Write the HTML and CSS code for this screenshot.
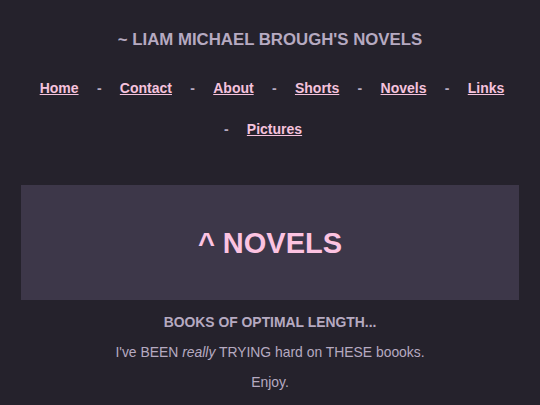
FILE: index.html
```html
<!DOCTYPE html>
<html lang="en">
<head>
<meta charset="utf-8">
<title>Novels</title>
<link rel="stylesheet" href="styles.css">
</head>
<body>
<header class="site-header">
  <h1 class="site-title">~ LIAM MICHAEL BROUGH'S NOVELS</h1>
  <nav class="nav">
    <a class="nav-link" href="#">Home</a><span class="nav-sep">-</span>
    <a class="nav-link" href="#">Contact</a><span class="nav-sep">-</span>
    <a class="nav-link" href="#">About</a><span class="nav-sep">-</span>
    <a class="nav-link" href="#">Shorts</a><span class="nav-sep">-</span>
    <a class="nav-link" href="#">Novels</a><span class="nav-sep">-</span>
    <a class="nav-link" href="#">Links</a><span class="nav-sep">-</span>
    <a class="nav-link nav-link-last" href="#">Pictures</a>
  </nav>
</header>
<main class="content">
  <section class="banner">
    <h2 class="banner-title">^ NOVELS</h2>
  </section>
  <p class="lead">BOOKS OF OPTIMAL LENGTH...</p>
  <p class="text">I've BEEN <em>really</em> TRYING hard on THESE boooks.</p>
  <p class="text">Enjoy.</p>
</main>
</body>
</html>
```
FILE: styles.css
```css
html, body {
  background: #25222c;
}
body {
  margin: 8px;
  font-family: "Liberation Sans", Arial, sans-serif;
  color: #b6aac1;
}
.site-header {
  padding-top: 22px;
}
.site-title {
  margin: 0;
  font-size: 16.8px;
  line-height: 20px;
  font-weight: bold;
  text-align: center;
  color: #b6aac1;
}
.nav {
  display: flex;
  flex-wrap: wrap;
  justify-content: center;
  column-gap: 18.3px;
  row-gap: 24px;
  margin: 30px 24px 0;
  padding-left: 4px;
  font-size: 14px;
  line-height: 17px;
  font-weight: bold;
}
.nav-link {
  color: #f5c2dd;
  text-decoration: underline;
}
.nav-link-last {
  margin-right: 18px;
}
.nav-sep {
  color: #b6aac1;
}
.content {
  margin-top: 47px;
}
.banner {
  margin: 0 13px 0 13px;
  height: 115px;
  background: #3d3749;
  display: flex;
  align-items: center;
  justify-content: center;
}
.banner-title {
  margin: 0;
  font-size: 29px;
  line-height: 34px;
  font-weight: bold;
  color: #fcc3e1;
}
.lead {
  margin: 14px 0 0;
  font-size: 13.9px;
  line-height: 16px;
  font-weight: bold;
  text-align: center;
}
.text {
  margin: 14px 0 0;
  font-size: 13.9px;
  line-height: 16px;
  text-align: center;
}
```
